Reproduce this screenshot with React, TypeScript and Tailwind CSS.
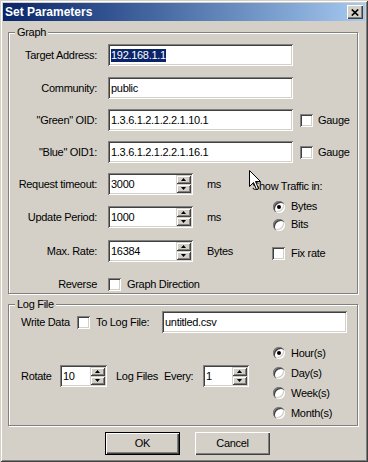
import React from "react";

const sunken =
  "bg-white shadow-[inset_1px_1px_0_#808080,inset_-1px_-1px_0_#ffffff,inset_2px_2px_0_#404040,inset_-2px_-2px_0_#d4d0c8]";
const raised =
  "bg-[#d4d0c8] shadow-[inset_1px_1px_0_#ffffff,inset_-1px_-1px_0_#404040,inset_-2px_-2px_0_#808080]";
const spinRaised =
  "bg-[#d4d0c8] shadow-[inset_1px_1px_0_#d4d0c8,inset_-1px_-1px_0_#404040,inset_2px_2px_0_#ffffff,inset_-2px_-2px_0_#808080]";

function Check() {
  return <div className={`w-[13px] h-[13px] shrink-0 ${sunken}`} />;
}

function Radio({ on }: { on?: boolean }) {
  return (
    <div className="w-[12px] h-[12px] shrink-0 rounded-full bg-white shadow-[inset_1px_1px_0_#808080,inset_2px_2px_0_#404040,inset_-1px_-1px_0_#ffffff,inset_-2px_-2px_0_#d4d0c8] flex items-center justify-center">
      {on && <div className="w-[4px] h-[4px] rounded-full bg-black" />}
    </div>
  );
}

function Field({ cls, children }: { cls: string; children?: React.ReactNode }) {
  return (
    <div className={`h-[22px] shrink-0 flex items-center pl-[3px] ${sunken} ${cls}`}>
      {children}
    </div>
  );
}

function Tri({ up }: { up?: boolean }) {
  return (
    <svg width="5" height="3" viewBox="0 0 5 3">
      <polygon points={up ? "2.5,0 5,3 0,3" : "0,0 5,0 2.5,3"} fill="black" />
    </svg>
  );
}

function Spin({ cls, value }: { cls: string; value: string }) {
  return (
    <div className={`h-[22px] shrink-0 flex p-[2px] ${sunken} ${cls}`}>
      <div className="flex-1 flex items-center pl-[1px]">{value}</div>
      <div className="w-[15px] flex flex-col">
        <div className={`flex-1 flex items-center justify-center ${spinRaised}`}>
          <Tri up />
        </div>
        <div className={`flex-1 flex items-center justify-center ${spinRaised}`}>
          <Tri />
        </div>
      </div>
    </div>
  );
}

function Group({ title, cls, children }: { title: string; cls: string; children: React.ReactNode }) {
  return (
    <div className={`relative w-[350px] border border-[#808080] shadow-[1px_1px_0_#ffffff,inset_1px_1px_0_#ffffff] ${cls}`}>
      <span className="absolute left-[6px] top-[-7px] bg-[#d4d0c8] px-[2px]">{title}</span>
      {children}
    </div>
  );
}

function Label({ children }: { children: React.ReactNode }) {
  return <div className="w-[89px] shrink-0 text-right pr-[1px]">{children}</div>;
}

export default function App() {
  return (
    <div className="relative w-[368px] h-[462px] bg-[#d4d0c8] p-[3px] font-['Liberation_Sans',Arial,sans-serif] text-[11px] leading-[13px] tracking-[-0.3px] text-black shadow-[inset_1px_1px_0_#d4d0c8,inset_-1px_-1px_0_#404040,inset_2px_2px_0_#ffffff,inset_-2px_-2px_0_#808080] overflow-hidden">
      {/* Title bar */}
      <div className="h-[18px] flex items-center bg-linear-to-r from-[#0a246a] to-[#a6caf0]">
        <span className="pl-[2px] text-white font-bold text-[12px] tracking-normal">Set Parameters</span>
        <div className={`ml-auto mr-[2px] w-[16px] h-[14px] flex items-center justify-center ${raised}`}>
          <svg width="8" height="7" viewBox="0 0 8 7">
            <path d="M0.8 0.5 L7.2 6.5 M7.2 0.5 L0.8 6.5" stroke="black" strokeWidth="1.7" />
          </svg>
        </div>
      </div>

      <div className="pl-[5px] pt-[11px]">
        {/* Graph */}
        <Group title="Graph" cls="h-[262px]">
          <div className="flex flex-col pt-[11px]">
            <div className="flex items-center">
              <Label>Target Address:</Label>
              <Field cls="ml-[10px] w-[185px]">
                <span className="bg-[#0a246a] text-white">192.168.1.1</span>
              </Field>
            </div>
            <div className="flex items-center mt-[11px]">
              <Label>Community:</Label>
              <Field cls="ml-[10px] w-[185px]">public</Field>
            </div>
            <div className="flex items-center mt-[10px]">
              <Label>"Green" OID:</Label>
              <Field cls="ml-[10px] w-[185px]">1.3.6.1.2.1.2.2.1.10.1</Field>
              <div className="ml-[7px] flex items-center gap-[5px]">
                <Check />
                <span>Gauge</span>
              </div>
            </div>
            <div className="flex items-center mt-[10px]">
              <Label>"Blue" OID1:</Label>
              <Field cls="ml-[10px] w-[185px]">1.3.6.1.2.1.2.2.1.16.1</Field>
              <div className="ml-[7px] flex items-center gap-[5px]">
                <Check />
                <span>Gauge</span>
              </div>
            </div>

            <div className="flex mt-[10px]">
              <div className="w-[243px] flex flex-col">
                <div className="flex items-center">
                  <Label>Request timeout:</Label>
                  <Spin cls="ml-[10px] w-[85px]" value="3000" />
                  <span className="ml-[14px]">ms</span>
                </div>
                <div className="flex items-center mt-[11px]">
                  <Label>Update Period:</Label>
                  <Spin cls="ml-[10px] w-[85px]" value="1000" />
                  <span className="ml-[14px]">ms</span>
                </div>
                <div className="flex items-center mt-[12px]">
                  <Label>Max. Rate:</Label>
                  <Spin cls="ml-[10px] w-[85px]" value="16384" />
                  <span className="ml-[14px]">Bytes</span>
                </div>
              </div>
              <div className="flex flex-col pt-[7px]">
                <span>Show Traffic in:</span>
                <div className="flex items-center gap-[6px] ml-[21px] mt-[7px] h-[13px]">
                  <Radio on />
                  <span>Bytes</span>
                </div>
                <div className="flex items-center gap-[6px] ml-[21px] mt-[5px] h-[13px]">
                  <Radio />
                  <span>Bits</span>
                </div>
                <div className="flex items-center gap-[6px] ml-[20px] mt-[16px] h-[13px]">
                  <Check />
                  <span>Fix rate</span>
                </div>
              </div>
            </div>

            <div className="flex items-center mt-[16px] h-[13px]">
              <Label>Reverse</Label>
              <div className="ml-[10px] flex items-center gap-[6px]">
                <Check />
                <span>Graph Direction</span>
              </div>
            </div>
          </div>
        </Group>

        {/* Log File */}
        <Group title="Log File" cls="h-[122px] mt-[10px]">
          <div className="flex flex-col pt-[6px] pl-[12px]">
            <div className="flex items-center">
              <span className="w-[56px] shrink-0">Write Data</span>
              <Check />
              <span className="ml-[6px] w-[66px] shrink-0">To Log File:</span>
              <Field cls="w-[185px]">untitled.csv</Field>
            </div>
            <div className="flex">
              <div className="w-[252px] shrink-0 flex items-center mt-[32px] self-start">
                <span className="w-[39px] shrink-0">Rotate</span>
                <Spin cls="w-[47px]" value="10" />
                <span className="ml-[9px] w-[48px] shrink-0">Log Files</span>
                <span className="w-[39px] shrink-0">Every:</span>
                <Spin cls="w-[46px]" value="1" />
              </div>
              <div className="flex flex-col mt-[10px]">
                {[
                  ["Hour(s)", true],
                  ["Day(s)", false],
                  ["Week(s)", false],
                  ["Month(s)", false],
                ].map(([t, on]) => (
                  <div key={t as string} className="h-[20px] flex items-center gap-[6px]">
                    <Radio on={on as boolean} />
                    <span>{t as string}</span>
                  </div>
                ))}
              </div>
            </div>
          </div>
        </Group>

        {/* Buttons */}
        <div className="flex pl-[97px] gap-[15px] mt-[6px]">
          <div className="w-[75px] h-[23px] border border-black flex items-center justify-center bg-[#d4d0c8] shadow-[inset_1px_1px_0_#ffffff,inset_-1px_-1px_0_#404040,inset_-2px_-2px_0_#808080]">
            OK
          </div>
          <div className={`w-[75px] h-[23px] flex items-center justify-center ${raised}`}>Cancel</div>
        </div>
      </div>

      {/* mouse cursor */}
      <svg className="absolute left-[249px] top-[170px]" width="13" height="21" viewBox="0 0 13 21">
        <path d="M0.5 0.5 L0.5 16.5 L4.5 12.5 L7.5 19.5 L9.5 18.5 L6.5 11.5 L11.5 11.5 Z" fill="white" stroke="black" strokeWidth="1" />
      </svg>
    </div>
  );
}
